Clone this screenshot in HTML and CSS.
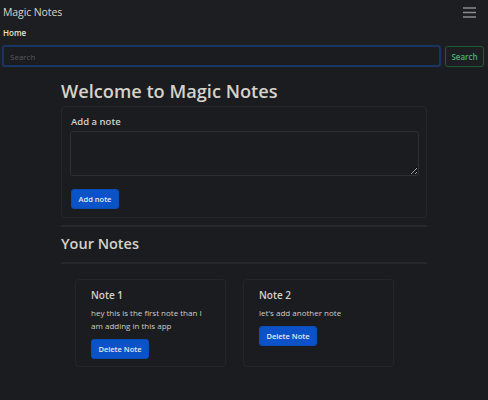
FILE: index.html
```html
<!DOCTYPE html>
<html lang="en">
<head>
<meta charset="utf-8">
<title>Magic Notes</title>
<link rel="stylesheet" href="styles.css">
</head>
<body>
<nav class="navbar">
  <div class="nav-top">
    <a class="brand" href="#">Magic Notes</a>
    <button class="toggler" aria-label="Toggle navigation">
      <svg width="15" height="11" viewBox="0 0 15 11"><path d="M1 1h13M1 5.5h13M1 10h13" stroke="#8a8c90" stroke-width="1.4"/></svg>
    </button>
  </div>
  <div class="nav-links"><a class="nav-link" href="#">Home</a></div>
  <form class="search-form">
    <input class="search-input" type="search" placeholder="Search">
    <button class="btn-search" type="button">Search</button>
  </form>
</nav>
<main class="container">
  <h1 class="title">Welcome to Magic Notes</h1>
  <section class="card add-card">
    <label class="add-label" for="addTxt">Add a note</label>
    <textarea id="addTxt" class="add-text"></textarea>
    <button class="btn-primary add-btn" type="button">Add note</button>
  </section>
  <hr class="rule">
  <h2 class="subtitle">Your Notes</h2>
  <hr class="rule rule2">
  <div class="notes">
    <div class="card note">
      <h5 class="note-title">Note 1</h5>
      <p class="note-text">hey this is the first note than I am adding in this app</p>
      <button class="btn-primary note-btn" type="button">Delete Note</button>
    </div>
    <div class="card note">
      <h5 class="note-title">Note 2</h5>
      <p class="note-text">let's add another note</p>
      <button class="btn-primary note-btn" type="button">Delete Note</button>
    </div>
  </div>
</main>
</body>
</html>
```
FILE: styles.css
```css
* { box-sizing: border-box; }
html, body { margin: 0; padding: 0; }
body {
  background: #1b1c1f;
  color: #d3cfc7;
  font-family: "Open Sans", "Noto Sans", sans-serif;
  width: 488px;
  height: 400px;
  overflow: hidden;
}
.navbar { background: #1d1e21; padding: 0 4px 0 2px; }
.nav-top {
  display: flex;
  justify-content: space-between;
  align-items: center;
  height: 24px;
  padding-left: 1px;
}
.brand {
  color: #d8d5cf;
  text-decoration: none;
  font-size: 10.5px;
  letter-spacing: -0.1px;
}
.toggler {
  background: none;
  border: none;
  padding: 0;
  margin-right: 7px;
  display: flex;
}
.nav-links { height: 16px; padding-left: 1px; display: flex; align-items: center; }
.nav-link {
  color: #eae3c6;
  text-decoration: none;
  font-size: 8px;
  font-weight: 600;
}
.search-form {
  display: flex;
  align-items: center;
  gap: 4px;
  padding: 4px 0 0;
  height: 28px;
}
.search-input {
  flex: 1;
  height: 22px;
  background: #1b1c1f;
  border: 2px solid #183563;
  border-radius: 3px;
  color: #ccc;
  font-family: inherit;
  font-size: 8px;
  padding: 0 6px;
  outline: none;
}
.search-input::placeholder { color: #55575c; }
.btn-search {
  height: 21px;
  width: 39px;
  background: transparent;
  border: 1px solid #1f5a38;
  border-radius: 3px;
  color: #47b56f;
  font-family: inherit;
  font-size: 8px;
  font-weight: 600;
  padding: 0;
}
.container { width: 366px; margin: 0 auto; }
.title {
  font-size: 18.2px;
  font-weight: 600;
  margin: 12px 0 4px;
  line-height: 22px;
  color: #d6d2ca;
}
.card {
  border: 1px solid #25262a;
  border-radius: 4px;
}
.add-card {
  padding: 8px 8px 8px 8px;
  display: flex;
  flex-direction: column;
  align-items: flex-start;
  height: 112px;
}
.add-label { font-size: 9.5px; font-weight: 600; color: #d6d2ca; margin-left: 1px; }
.add-text {
  margin-top: 3px;
  width: 349px;
  height: 45px;
  background: #1b1c1f;
  border: 1px solid #2e2f33;
  border-radius: 3px;
  resize: vertical;
}
.btn-primary {
  background: #0a52c8;
  border: 1px solid #0b4db8;
  border-radius: 3px;
  color: #e6e8ee;
  font-family: inherit;
  font-size: 7.5px;
  font-weight: 600;
  padding: 0;
}
.add-btn { margin-top: 13px; margin-left: 1px; width: 48px; height: 20px; }
.rule { border: 0; border-top: 2px solid #27282c; margin: 7px 0 0; }
.subtitle {
  font-size: 14.5px;
  font-weight: 600;
  margin: 8px 0 0;
  line-height: 18px;
  color: #d6d2ca;
}
.rule2 { margin-top: 9px; }
.notes {
  display: flex;
  gap: 17px;
  padding: 15px 0 0 14px;
}
.note {
  width: 151px;
  height: 88px;
  padding: 9px 15px;
}
.note-title { font-size: 10px; font-weight: 600; margin: 0 0 4px; line-height: 13px; color: #d6d2ca; }
.note-text { font-size: 8px; line-height: 13px; margin: 0 0 3px; color: #d0ccc4; }
.note-btn { width: 58px; height: 20px; }
```
